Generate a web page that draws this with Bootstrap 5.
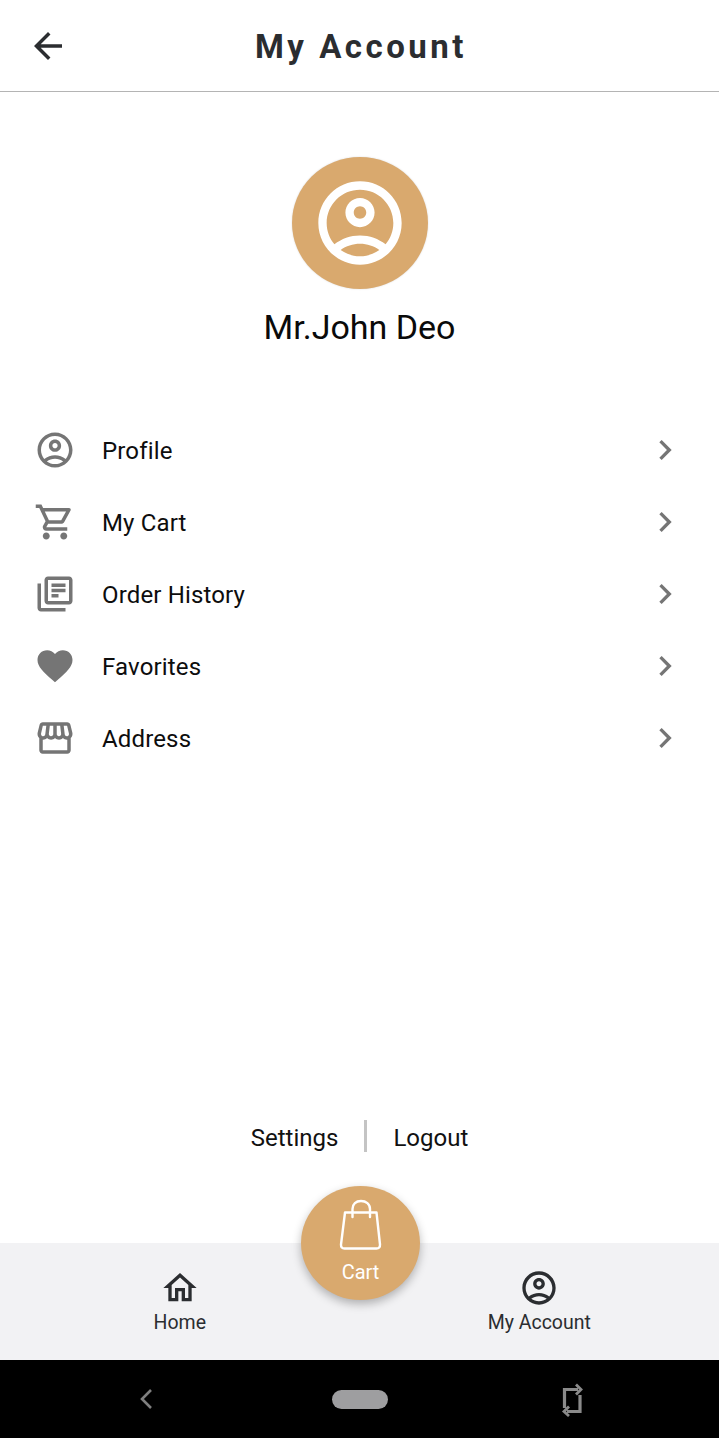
<!DOCTYPE html>
<html lang="en">
<head>
  <meta charset="UTF-8" />
  <meta name="viewport" content="width=device-width, initial-scale=1.0"/>
  <title>My Account</title>
  <link rel="stylesheet" href="https://cdn.jsdelivr.net/npm/bootstrap@5.3.0/dist/css/bootstrap.min.css" />
  <style>
    html, body {
      height: 100%;
      margin: 0;
      overflow: hidden;
    }

    body {
      background-color: #fff;
      font-family: Roboto, "Liberation Sans", sans-serif;
      color: #111;
    }

    .page-wrap {
      height: 1438px;
    }

    .top-bar {
      height: 92px;
      padding-left: 27px;
      border-bottom: 1px solid #b4b4b4;
      color: #2b2d30;
    }

    .top-title {
      font-size: 33px;
      font-weight: 700;
      letter-spacing: 3.5px;
      line-height: 40px;
      margin-right: 66px;
      padding-top: 2px;
    }

    .user-pic {
      width: 136px;
      height: 132px;
      margin-top: 65px;
      background-color: #d9a96e;
      border-radius: 50%;
      box-shadow: 0 0 2px rgba(0, 0, 0, 0.15);
    }

    .user-name {
      font-size: 34px;
      line-height: 38px;
      margin-top: 19px;
      color: #0a0a0a;
    }

    .menu-list {
      margin-top: 68px;
    }

    .menu-row {
      height: 72px;
      padding: 0 34px 0 34px;
      background: transparent;
      border: 0;
      font-size: 24px;
      letter-spacing: 0.15px;
      color: #0d0d0d;
    }

    .menu-label {
      margin-left: 26px;
      padding-top: 2px;
    }

    .menu-icon {
      fill: #757575;
    }

    .foot-links {
      font-size: 24px;
      height: 32px;
      line-height: 32px;
      margin-bottom: 91px;
      color: #111;
    }

    .foot-link {
      padding-top: 2px;
    }

    .foot-sep {
      width: 3px;
      height: 32px;
      background-color: #c4c4c4;
      margin: 0 26px;
    }

    .bottom-bar {
      height: 117px;
      background-color: #f2f2f4;
      padding-top: 25px;
      color: #2b2d30;
      font-size: 19.5px;
      line-height: 26px;
    }

    .bottom-icon {
      fill: #2b2d30;
    }

    .tab-label {
      margin-top: 2px;
    }

    .cart-fab {
      position: absolute;
      left: 301px;
      top: -57px;
      width: 119px;
      height: 114px;
      border-radius: 50%;
      background-color: #d9a96e;
      color: #fff;
      box-shadow: 0 4px 10px rgba(0, 0, 0, 0.28);
      padding-top: 13px;
      font-size: 20px;
      line-height: 26px;
    }

    .cart-bag {
      margin-bottom: 8px;
    }

    .system-bar {
      height: 78px;
      background-color: #000;
      padding: 0 135px 0 139px;
    }

    .system-pill {
      width: 56px;
      height: 19px;
      margin-left: 7px;
      border-radius: 10px;
      background-color: #9e9ea0;
    }
  </style>
</head>
<body>
  <div class="page-wrap d-flex flex-column">
    <div class="top-bar d-flex align-items-center flex-shrink-0">
      <svg width="42" height="42" viewBox="0 0 24 24" fill="#2b2d30"><path d="M20 11H7.83l5.59-5.59L12 4l-8 8 8 8 1.41-1.41L7.83 13H20v-2z"/></svg>
      <div class="top-title flex-grow-1 text-center">My Account</div>
    </div>

    <div class="d-flex flex-column align-items-center">
      <div class="user-pic d-flex align-items-center justify-content-center">
        <svg width="100" height="100" viewBox="0 0 24 24" fill="#fff"><path d="M12 2C6.48 2 2 6.48 2 12s4.48 10 10 10 10-4.48 10-10S17.52 2 12 2zM7.35 18.5C8.66 17.56 10.26 17 12 17s3.34.56 4.65 1.5C15.34 19.44 13.74 20 12 20s-3.34-.56-4.65-1.5zm10.79-1.38C16.45 15.8 14.32 15 12 15s-4.45.8-6.14 2.12C4.7 15.73 4 13.95 4 12c0-4.42 3.58-8 8-8s8 3.58 8 8c0 1.95-.7 3.73-1.86 5.12zM12 6c-1.93 0-3.5 1.57-3.5 3.5S10.07 13 12 13s3.5-1.57 3.5-3.5S13.93 6 12 6zm0 5c-.83 0-1.5-.67-1.5-1.5S11.17 8 12 8s1.5.67 1.5 1.5S12.83 11 12 11z"/></svg>
      </div>
      <div class="user-name">Mr.John Deo</div>
    </div>

    <div class="menu-list list-group list-group-flush">
      <div class="menu-row list-group-item d-flex align-items-center">
        <svg class="menu-icon" width="42" height="42" viewBox="0 0 24 24"><path d="M12 2C6.48 2 2 6.48 2 12s4.48 10 10 10 10-4.48 10-10S17.52 2 12 2zM7.35 18.5C8.66 17.56 10.26 17 12 17s3.34.56 4.65 1.5C15.34 19.44 13.74 20 12 20s-3.34-.56-4.65-1.5zm10.79-1.38C16.45 15.8 14.32 15 12 15s-4.45.8-6.14 2.12C4.7 15.73 4 13.95 4 12c0-4.42 3.58-8 8-8s8 3.58 8 8c0 1.95-.7 3.73-1.86 5.12zM12 6c-1.93 0-3.5 1.57-3.5 3.5S10.07 13 12 13s3.5-1.57 3.5-3.5S13.93 6 12 6zm0 5c-.83 0-1.5-.67-1.5-1.5S11.17 8 12 8s1.5.67 1.5 1.5S12.83 11 12 11z"/></svg>
        <span class="menu-label flex-grow-1">Profile</span>
        <svg class="menu-icon" width="40" height="40" viewBox="0 0 24 24"><path d="M10 6L8.59 7.41 13.17 12l-4.58 4.59L10 18l6-6z"/></svg>
      </div>
      <div class="menu-row list-group-item d-flex align-items-center">
        <svg class="menu-icon" width="42" height="42" viewBox="0 0 24 24"><path d="M15.55 13c.75 0 1.41-.41 1.75-1.03l3.58-6.49c.37-.66-.11-1.48-.87-1.48H5.21l-.94-2H1v2h2l3.6 7.59-1.35 2.44C4.52 15.37 5.48 17 7 17h12v-2H7l1.1-2h7.45zM6.16 6h12.15l-2.76 5H8.53L6.16 6zM7 18c-1.1 0-1.99.9-1.99 2S5.9 22 7 22s2-.9 2-2-.9-2-2-2zm10 0c-1.1 0-1.99.9-1.99 2s.89 2 1.99 2 2-.9 2-2-.9-2-2-2z"/></svg>
        <span class="menu-label flex-grow-1">My Cart</span>
        <svg class="menu-icon" width="40" height="40" viewBox="0 0 24 24"><path d="M10 6L8.59 7.41 13.17 12l-4.58 4.59L10 18l6-6z"/></svg>
      </div>
      <div class="menu-row list-group-item d-flex align-items-center">
        <svg class="menu-icon" width="42" height="42" viewBox="0 0 24 24"><path d="M4 6H2v14c0 1.1.9 2 2 2h14v-2H4V6zm16-4H8c-1.1 0-2 .9-2 2v12c0 1.1.9 2 2 2h12c1.1 0 2-.9 2-2V4c0-1.1-.9-2-2-2zm0 14H8V4h12v12zM10 9h8v2h-8zm0 3h4v2h-4zm0-6h8v2h-8z"/></svg>
        <span class="menu-label flex-grow-1">Order History</span>
        <svg class="menu-icon" width="40" height="40" viewBox="0 0 24 24"><path d="M10 6L8.59 7.41 13.17 12l-4.58 4.59L10 18l6-6z"/></svg>
      </div>
      <div class="menu-row list-group-item d-flex align-items-center">
        <svg class="menu-icon" width="42" height="42" viewBox="0 0 24 24"><path d="M12 21.35l-1.45-1.32C5.4 15.36 2 12.28 2 8.5 2 5.42 4.42 3 7.5 3c1.74 0 3.41.81 4.5 2.09C13.09 3.81 14.76 3 16.5 3 19.58 3 22 5.42 22 8.5c0 3.78-3.4 6.86-8.55 11.54L12 21.35z"/></svg>
        <span class="menu-label flex-grow-1">Favorites</span>
        <svg class="menu-icon" width="40" height="40" viewBox="0 0 24 24"><path d="M10 6L8.59 7.41 13.17 12l-4.58 4.59L10 18l6-6z"/></svg>
      </div>
      <div class="menu-row list-group-item d-flex align-items-center">
        <svg class="menu-icon" width="42" height="42" viewBox="0 0 24 24"><path d="M21.9 8.89l-1.05-4.37c-.22-.9-1-1.52-1.91-1.52H5.05c-.9 0-1.69.63-1.9 1.52L2.1 8.89c-.24 1.02-.02 2.06.62 2.88.08.11.19.19.28.29V19c0 1.1.9 2 2 2h14c1.1 0 2-.9 2-2v-6.94c.09-.09.2-.18.28-.28.64-.82.87-1.87.62-2.89zm-2.99-3.9l1.05 4.37c.1.42.01.84-.25 1.17-.14.18-.44.47-.94.47-.61 0-1.14-.49-1.21-1.14L16.98 5l1.93-.01zM13 5h1.96l.54 4.52c.05.39-.07.78-.33 1.07-.22.26-.54.41-.95.41-.67 0-1.22-.59-1.22-1.31V5zM8.49 9.52L9.04 5H11v4.69c0 .72-.55 1.31-1.29 1.31-.34 0-.65-.15-.89-.41-.25-.29-.37-.68-.33-1.07zm-4.45-.16L5.05 5h1.97l-.58 4.86c-.08.65-.6 1.14-1.21 1.14-.49 0-.8-.29-.93-.47-.27-.32-.36-.75-.26-1.17zM5 19v-6.03c.08.01.15.03.23.03.87 0 1.66-.36 2.24-.95.6.6 1.4.95 2.31.95.87 0 1.65-.36 2.23-.93.59.57 1.39.93 2.29.93.84 0 1.64-.35 2.24-.95.58.59 1.37.95 2.24.95.08 0 .15-.02.23-.03V19H5z"/></svg>
        <span class="menu-label flex-grow-1">Address</span>
        <svg class="menu-icon" width="40" height="40" viewBox="0 0 24 24"><path d="M10 6L8.59 7.41 13.17 12l-4.58 4.59L10 18l6-6z"/></svg>
      </div>
    </div>

    <div class="foot-links d-flex justify-content-center align-items-start mt-auto">
      <span class="foot-link">Settings</span>
      <span class="foot-sep"></span>
      <span class="foot-link">Logout</span>
    </div>

    <!-- Bottom tabs, the cart button sits over the top edge -->
    <div class="bottom-bar position-relative flex-shrink-0">
      <div class="row g-0 text-center">
        <div class="col-6">
          <svg class="bottom-icon d-block mx-auto" width="40" height="40" viewBox="0 0 24 24"><path d="M12 5.69l5 4.5V18h-2v-6H9v6H7v-7.81l5-4.5M12 3L2 12h3v8h6v-6h2v6h6v-8h3L12 3z"/></svg>
          <div class="tab-label">Home</div>
        </div>
        <div class="col-6">
          <svg class="bottom-icon d-block mx-auto" width="40" height="40" viewBox="0 0 24 24"><path d="M12 2C6.48 2 2 6.48 2 12s4.48 10 10 10 10-4.48 10-10S17.52 2 12 2zM7.35 18.5C8.66 17.56 10.26 17 12 17s3.34.56 4.65 1.5C15.34 19.44 13.74 20 12 20s-3.34-.56-4.65-1.5zm10.79-1.38C16.45 15.8 14.32 15 12 15s-4.45.8-6.14 2.12C4.7 15.73 4 13.95 4 12c0-4.42 3.58-8 8-8s8 3.58 8 8c0 1.95-.7 3.73-1.86 5.12zM12 6c-1.93 0-3.5 1.57-3.5 3.5S10.07 13 12 13s3.5-1.57 3.5-3.5S13.93 6 12 6zm0 5c-.83 0-1.5-.67-1.5-1.5S11.17 8 12 8s1.5.67 1.5 1.5S12.83 11 12 11z"/></svg>
          <div class="tab-label">My Account</div>
        </div>
      </div>
      <div class="cart-fab text-center">
        <svg class="cart-bag d-block mx-auto" width="44" height="52" viewBox="0 0 44 52" fill="none" stroke="#fff" stroke-width="2.4" stroke-linecap="round" stroke-linejoin="round"><path d="M6 13.5H37.5L41 45.5Q41.2 49.5 37.5 49.5H5.5Q1.8 49.5 2 45.5Z"/><path d="M13.5 18V10C13.5 5 17 2 22 2S31 5 31 10V18"/></svg>
        <div>Cart</div>
      </div>
    </div>

    <!-- Android nav buttons -->
    <div class="system-bar d-flex justify-content-between align-items-center flex-shrink-0">
      <svg width="14" height="22" viewBox="0 0 14 22" fill="none" stroke="#7f7f7f" stroke-width="2.6"><path d="M12 2L3 11l9 9"/></svg>
      <span class="system-pill"></span>
      <svg width="24" height="36" viewBox="0 0 24 36" fill="none" stroke="#8a8a8a" stroke-width="3.2"><path d="M4.5 27V8.5H18"/><path d="M16 3.5L21 8.5 16 13.5" stroke-width="2.8"/><path d="M20 14V30.5H7"/><path d="M9 25.5L4 30.5 9 35" stroke-width="2.8"/></svg>
    </div>
  </div>

  <script src="https://cdn.jsdelivr.net/npm/bootstrap@5.3.0/dist/js/bootstrap.bundle.min.js"></script>
</body>
</html>
